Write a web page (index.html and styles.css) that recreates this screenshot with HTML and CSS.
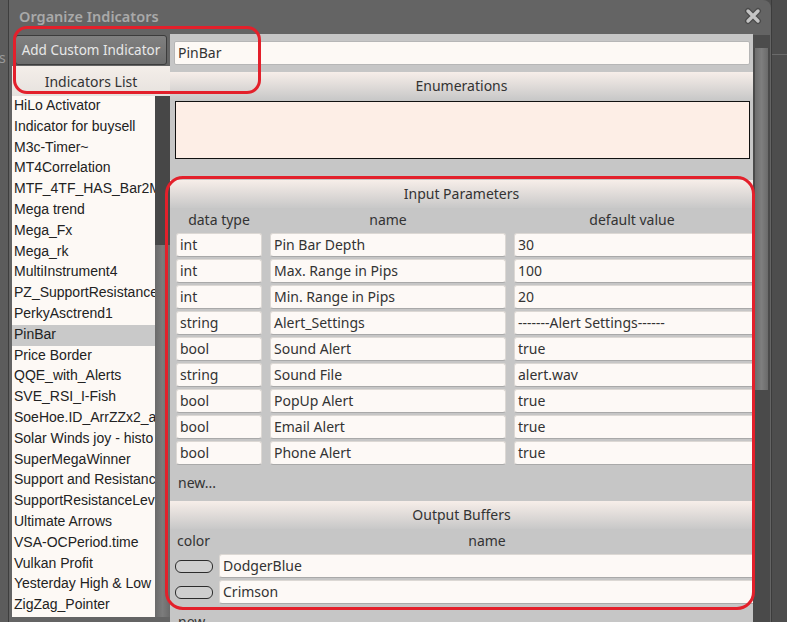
FILE: index.html
```html
<!DOCTYPE html>
<html lang="en">
<head>
  <meta charset="UTF-8">
  <title>Organize Indicators</title>
  <link rel="stylesheet" href="styles.css">
</head>
<body>
  <div class="desk">
    <div class="behind"><span class="behind-text">ts</span></div>

    <div class="window">
      <div class="titlebar">
        <span class="title">Organize Indicators</span>
        <svg class="close" width="18" height="18" viewBox="0 0 18 18">
          <path d="M4 4 L14 14 M14 4 L4 14" stroke="#4a4a4a" stroke-width="6" stroke-linecap="round"/>
          <path d="M4 4 L14 14 M14 4 L4 14" stroke="#c4c4c4" stroke-width="3.4" stroke-linecap="round"/>
        </svg>
      </div>

      <div class="win-body">
        <div class="left">
          <button class="add-btn">Add Custom Indicator</button>
          <div class="list-head">Indicators List</div>
          <div class="list-wrap">
            <ul class="ind-list">
              <li>HiLo Activator</li>
              <li>Indicator for buysell</li>
              <li>M3c-Timer~</li>
              <li>MT4Correlation</li>
              <li>MTF_4TF_HAS_Bar2M</li>
              <li>Mega trend</li>
              <li>Mega_Fx</li>
              <li>Mega_rk</li>
              <li>MultiInstrument4</li>
              <li>PZ_SupportResistance</li>
              <li>PerkyAsctrend1</li>
              <li class="selected">PinBar</li>
              <li>Price Border</li>
              <li>QQE_with_Alerts</li>
              <li>SVE_RSI_I-Fish</li>
              <li>SoeHoe.ID_ArrZZx2_a</li>
              <li>Solar Winds joy - histo</li>
              <li>SuperMegaWinner</li>
              <li>Support and Resistance</li>
              <li>SupportResistanceLev</li>
              <li>Ultimate Arrows</li>
              <li>VSA-OCPeriod.time</li>
              <li>Vulkan Profit</li>
              <li>Yesterday High &amp; Low</li>
              <li>ZigZag_Pointer</li>
            </ul>
            <div class="list-scroll"><div class="list-thumb"></div></div>
          </div>
        </div>

        <div class="right">
          <div class="name-input">PinBar</div>

          <div class="sect-head enum-head">Enumerations</div>
          <div class="enum-box"></div>

          <div class="sect-head params-head">Input Parameters</div>
          <div class="params">
            <div class="col-head">data type</div>
            <div class="col-head">name</div>
            <div class="col-head value-head">default value</div>

            <div class="cell">int</div><div class="cell">Pin Bar Depth</div><div class="cell">30</div>
            <div class="cell">int</div><div class="cell">Max. Range in Pips</div><div class="cell">100</div>
            <div class="cell">int</div><div class="cell">Min. Range in Pips</div><div class="cell">20</div>
            <div class="cell">string</div><div class="cell">Alert_Settings</div><div class="cell">-------Alert Settings------</div>
            <div class="cell">bool</div><div class="cell">Sound Alert</div><div class="cell">true</div>
            <div class="cell">string</div><div class="cell">Sound File</div><div class="cell">alert.wav</div>
            <div class="cell">bool</div><div class="cell">PopUp Alert</div><div class="cell">true</div>
            <div class="cell">bool</div><div class="cell">Email Alert</div><div class="cell">true</div>
            <div class="cell">bool</div><div class="cell">Phone Alert</div><div class="cell">true</div>
          </div>
          <div class="new-row">new...</div>

          <div class="sect-head">Output Buffers</div>
          <div class="buffers">
            <div class="col-head left-head">color</div>
            <div class="col-head">name</div>

            <div class="swatch"></div><div class="cell">DodgerBlue</div>
            <div class="swatch"></div><div class="cell">Crimson</div>
          </div>
          <div class="new-row">new...</div>
        </div>

        <div class="vscroll">
          <div class="vscroll-cap"></div>
          <div class="vscroll-thumb"></div>
        </div>
      </div>
    </div>

    <div class="outside"><div class="outside-line"></div></div>
  </div>

  <!-- red markers drawn over the screenshot -->
  <div class="marker marker-top"></div>
  <div class="marker marker-params"></div>
</body>
</html>
```

FILE: styles.css
```css
body {
  margin: 0;
  width: 787px;
  height: 622px;
  overflow: hidden;
  background-color: #4f4f4f;
  font-family: "Noto Sans", "Open Sans", sans-serif;
  font-size: 14px;
  color: #333;
  position: relative;
}

.desk {
  display: flex;
  height: 622px;
}

.behind {
  width: 9px;
  background-color: #5c5c5c;
  border-right: 1px solid #3e3e3e;
  overflow: hidden;
  padding-top: 48px;
  box-sizing: border-box;
}

.behind-text {
  display: block;
  margin-left: -6px;
  color: #9a9a9a;
  font-size: 14px;
}

.window {
  width: 762px;
  background-color: #646464;
  border-top-right-radius: 8px;
  display: flex;
  flex-direction: column;
}

.titlebar {
  height: 34px;
  display: flex;
  align-items: center;
  justify-content: space-between;
  padding: 0 9px 0 10px;
  box-sizing: border-box;
}

.title {
  color: #a9a9a9;
  font-size: 14.5px;
  font-weight: 600;
  margin-top: -3px;
}

.close {
  margin-top: -2px;
}

.win-body {
  flex: 1;
  display: flex;
  padding-left: 3px;
  min-height: 0;
}

/* left column */
.left {
  width: 158px;
  display: flex;
  flex-direction: column;
}

.add-btn {
  margin: 1px 3px 0 3px;
  height: 30px;
  background: linear-gradient(#808080, #6c6c6c);
  border: 1px solid #3c3c3c;
  border-radius: 3px;
  color: #e8e8e8;
  font-family: "Noto Sans", sans-serif;
  font-size: 13.5px;
  padding: 0;
}

.list-head {
  height: 30px;
  margin-top: 1px;
  background: linear-gradient(#f4eee9, #e6e2de);
  display: flex;
  align-items: center;
  justify-content: center;
  color: #333;
  font-size: 14px;
  padding-top: 1px;
  box-sizing: border-box;
}

.list-wrap {
  flex: 1;
  display: flex;
  min-height: 0;
}

.ind-list {
  list-style: none;
  margin: 0;
  padding: 0;
  width: 143px;
  background-color: #fdf9f5;
  overflow: hidden;
  font-family: "Liberation Sans", Arial, sans-serif;
  font-size: 14px;
  color: #222;
  height: 521px;
}

.ind-list li {
  height: 20.8px;
  line-height: 19.5px;
  padding-left: 2px;
  white-space: nowrap;
}

.ind-list li.selected {
  background-color: #c9c9c9;
}

.list-scroll {
  width: 15px;
  background-color: #474747;
  display: flex;
  flex-direction: column;
  justify-content: flex-end;
  height: 521px;
}

.list-thumb {
  height: 372px;
  background: linear-gradient(90deg, #6a6a6a, #7c7c7c 50%, #6a6a6a);
}

/* right panel */
.right {
  width: 583px;
  background-color: #c6c6c6;
  overflow: hidden;
  display: flex;
  flex-direction: column;
}

.name-input {
  margin: 7px 3px 0 4px;
  height: 24px;
  line-height: 22px;
  box-sizing: border-box;
  border: 1px solid #b6b6b6;
  border-radius: 2px;
  background-color: #fdf9f5;
  padding-left: 3px;
}

.sect-head {
  height: 28px;
  flex-shrink: 0;
  background: linear-gradient(#f7eee9, #c8c8c8);
  display: flex;
  align-items: center;
  justify-content: center;
  padding-bottom: 1px;
  box-sizing: border-box;
}

.enum-head {
  margin-top: 7px;
}

.enum-box {
  margin: 1px 3px 0 5px;
  height: 58px;
  flex-shrink: 0;
  box-sizing: border-box;
  border: 1px solid #111;
  background-color: #fdeee6;
}

.params-head {
  margin-top: 21px;
}

.params {
  display: grid;
  grid-template-columns: 86px 236px 262px;
  column-gap: 8px;
  row-gap: 2px;
  padding-left: 6px;
}

.col-head {
  height: 23px;
  line-height: 23px;
  text-align: center;
  white-space: nowrap;
}

.value-head {
  padding-right: 26px;
}

.left-head {
  text-align: left;
  padding-left: 2px;
}

.cell {
  height: 24px;
  line-height: 22px;
  box-sizing: border-box;
  background-color: #fdf9f6;
  border: 1px solid #dcd8d4;
  border-bottom-color: #a9a9a9;
  border-radius: 3px;
  padding-left: 3px;
  white-space: nowrap;
  overflow: hidden;
}

.new-row {
  height: 36px;
  flex-shrink: 0;
  line-height: 35px;
  padding-left: 8px;
}

.buffers {
  display: grid;
  grid-template-columns: 38px 550px;
  column-gap: 6px;
  row-gap: 2px;
  padding-left: 5px;
  align-items: center;
}

.buffers .col-head:nth-child(2) {
  padding-right: 14px;
}

.swatch {
  height: 13px;
  box-sizing: border-box;
  border: 1px solid #2c2c2c;
  border-radius: 6px;
  background-color: #cfcfcf;
}

/* window scrollbar */
.vscroll {
  width: 17px;
  margin-top: 1px;
  background-color: #4a4a4a;
  display: flex;
  flex-direction: column;
}

.vscroll-cap {
  height: 13px;
  background-color: #4c4c4c;
}

.vscroll-thumb {
  height: 342px;
  margin: 0 2px;
  background: linear-gradient(90deg, #6c6c6c, #7e7e7e 50%, #6a6a6a);
}

.outside {
  flex: 1;
  background-color: #4d4d4d;
  border-left: 1px solid #3c3c3c;
  padding-top: 54px;
}

.outside-line {
  height: 1px;
  background-color: #6a6a6a;
}

/* red markers */
.marker {
  position: absolute;
  border: 3px solid #e3202b;
  box-sizing: border-box;
}

.marker-top {
  left: 13px;
  top: 26px;
  width: 248px;
  height: 68px;
  border-radius: 14px;
}

.marker-params {
  left: 165px;
  top: 176px;
  width: 590px;
  height: 434px;
  border-radius: 18px;
}
```
